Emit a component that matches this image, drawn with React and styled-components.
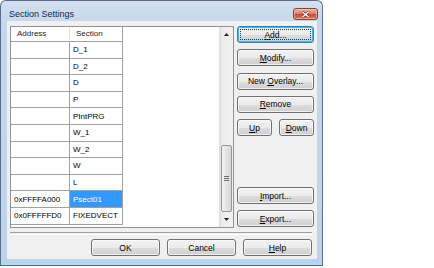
import React from "react";
import styled, { createGlobalStyle } from "styled-components";

const GlobalStyle = createGlobalStyle`
  html, body {
    margin: 0;
    padding: 0;
    background: #ffffff;
  }
  body {
    font-family: "Liberation Sans", Arial, sans-serif;
    color: #000;
  }
`;

const Page = styled.div`
  width: 434px;
  height: 268px;
  overflow: hidden;
`;

const Window = styled.div`
  box-sizing: border-box;
  width: 323px;
  height: 266px;
  display: flex;
  flex-direction: column;
  border: 1px solid #5a6f8e;
  border-bottom-color: #4f6a8d;
  border-radius: 6px 6px 0 0;
  padding: 0 5px 6px 6px;
  background: linear-gradient(#d3e0f0 0px, #c6d7ec 22px, #bdd2ea 100%);
  box-shadow: inset 0 -2px 0 #a9dcf3;
`;

const TitleBar = styled.div`
  height: 21px;
  display: flex;
  align-items: center;
  justify-content: space-between;
  padding-left: 2px;
`;

const Title = styled.span`
  font-size: 9px;
  color: #15284a;
  padding-top: 5px;
`;

const CloseButton = styled.div`
  box-sizing: border-box;
  width: 25px;
  height: 12px;
  margin-top: 6px;
  margin-right: -1px;
  display: flex;
  align-items: center;
  justify-content: center;
  border: 1px solid #8b3c2e;
  border-radius: 3px;
  background: linear-gradient(#eab3a5 0%, #d9826e 45%, #c4503a 55%, #d47a63 100%);
  box-shadow: inset 0 0 0 1px rgba(255, 220, 210, 0.5);
`;

const Client = styled.div`
  flex: 1;
  display: flex;
  flex-direction: column;
  background: #f0f0f0;
  padding: 5px 3px 3px 3px;
`;

const MainRow = styled.div`
  display: flex;
  gap: 3px;
  height: 202px;
`;

const ListBox = styled.div`
  box-sizing: border-box;
  width: 224px;
  height: 202px;
  display: flex;
  border: 1px solid #8d929b;
  background: #ffffff;
`;

const Grid = styled.div`
  flex: 1;
  align-self: flex-start;
  display: grid;
  grid-template-columns: 59px 53px;
  grid-template-rows: 15px repeat(11, 16.6px);
`;

const HeaderCell = styled.div`
  box-sizing: border-box;
  font-size: 8px;
  line-height: 14px;
  padding-left: 6px;
  color: #1c1c1c;
  border-bottom: 1px solid #a0a0a0;
  border-right: 1px solid ${({ $last }) => ($last ? "#a0a0a0" : "#e2e3e5")};
  background: #ffffff;
`;

const Cell = styled.div`
  box-sizing: border-box;
  font-size: 8px;
  display: flex;
  align-items: center;
  padding-left: 3px;
  border-bottom: 1px solid #a0a0a0;
  border-right: 1px solid #a0a0a0;
  white-space: nowrap;
  background: ${({ $selected }) => ($selected ? "#3399ff" : "#ffffff")};
  color: ${({ $selected }) => ($selected ? "#ffffff" : "#000000")};
`;

const ScrollBar = styled.div`
  box-sizing: border-box;
  width: 14px;
  display: flex;
  flex-direction: column;
  background: linear-gradient(90deg, #e3e3e3, #eeeeee 30%, #f2f2f2);
  border-left: 1px solid #e0e0e0;
`;

const ArrowBox = styled.div`
  height: 15px;
  display: flex;
  align-items: center;
  justify-content: center;
`;

const Track = styled.div`
  flex: 1;
  display: flex;
  flex-direction: column;
  justify-content: flex-end;
  align-items: center;
`;

const Thumb = styled.div`
  box-sizing: border-box;
  width: 11px;
  height: 67px;
  border: 1px solid #979797;
  border-radius: 2px;
  background: linear-gradient(90deg, #f4f4f4, #e4e4e4 50%, #d6d6d6);
  display: flex;
  flex-direction: column;
  align-items: center;
  justify-content: center;
  gap: 1px;
`;

const GripLine = styled.span`
  width: 5px;
  height: 1px;
  background: #6d6d6d;
`;

const SideColumn = styled.div`
  width: 77px;
  display: flex;
  flex-direction: column;
  padding-bottom: 1px;
`;

const ButtonGroup = styled.div`
  display: flex;
  flex-direction: column;
  gap: ${({ $gap }) => $gap || "6px"};
  margin-top: ${({ $push }) => ($push ? "auto" : "0")};
`;

const ButtonPair = styled.div`
  display: flex;
  justify-content: space-between;
`;

const Button = styled.div`
  position: relative;
  box-sizing: border-box;
  width: ${({ $w }) => $w || "100%"};
  height: 17px;
  display: flex;
  align-items: center;
  justify-content: center;
  font-size: 8.5px;
  color: #000;
  border: 1px solid ${({ $default }) => ($default ? "#3c7fb1" : "#707070")};
  border-radius: 3px;
  background: linear-gradient(#f2f2f2 0%, #ebebeb 50%, #dddddd 51%, #cfcfcf 100%);
  box-shadow: ${({ $default }) =>
    $default
      ? "inset 0 0 0 1px #48b6e0"
      : "inset 0 0 0 1px rgba(255, 255, 255, 0.7)"};

  ${({ $default }) =>
    $default &&
    `
    &::after {
      content: "";
      position: absolute;
      inset: 2px;
      border: 1px dotted #1b3f5c;
    }
  `}

  u {
    text-decoration: underline;
    text-underline-offset: 1px;
  }
`;

const Separator = styled.div`
  height: 1px;
  margin: 4px 2px 0 0;
  border-top: 1px solid #a0a0a0;
  border-bottom: 1px solid #ffffff;
`;

const BottomRow = styled.div`
  display: flex;
  justify-content: flex-end;
  gap: 7px;
  margin-top: 4px;
  padding-right: 2px;
`;

const rows = [
  ["", "D_1"],
  ["", "D_2"],
  ["", "D"],
  ["", "P"],
  ["", "PIntPRG"],
  ["", "W_1"],
  ["", "W_2"],
  ["", "W"],
  ["", "L"],
  ["0xFFFFA000", "Psect01", true],
  ["0x0FFFFFD0", "FIXEDVECT"],
];

function Arrow({ down }) {
  return (
    <svg width="5" height="3" viewBox="0 0 5 3">
      <path d={down ? "M0 0 H5 L2.5 3 Z" : "M0 3 H5 L2.5 0 Z"} fill="#222" />
    </svg>
  );
}

export default function App() {
  return (
    <Page>
      <GlobalStyle />
      <Window>
        <TitleBar>
          <Title>Section Settings</Title>
          <CloseButton>
            <svg width="9" height="7" viewBox="0 0 9 7">
              <path d="M1.5 1 L7.5 6 M7.5 1 L1.5 6" stroke="#6b2418" strokeWidth="2.6" />
              <path d="M1.5 1 L7.5 6 M7.5 1 L1.5 6" stroke="#ffffff" strokeWidth="1.5" />
            </svg>
          </CloseButton>
        </TitleBar>
        <Client>
          <MainRow>
            <ListBox>
              <Grid>
                <HeaderCell>Address</HeaderCell>
                <HeaderCell $last>Section</HeaderCell>
                {rows.map(([addr, sec, sel]) => (
                  <React.Fragment key={sec}>
                    <Cell>{addr}</Cell>
                    <Cell $selected={sel}>{sec}</Cell>
                  </React.Fragment>
                ))}
              </Grid>
              <ScrollBar>
                <ArrowBox>
                  <Arrow />
                </ArrowBox>
                <Track>
                  <Thumb>
                    <GripLine />
                    <GripLine />
                    <GripLine />
                  </Thumb>
                </Track>
                <ArrowBox>
                  <Arrow down />
                </ArrowBox>
              </ScrollBar>
            </ListBox>
            <SideColumn>
              <ButtonGroup $gap="6.33px">
                <Button $default>
                  <span><u>A</u>dd...</span>
                </Button>
                <Button>
                  <span><u>M</u>odify...</span>
                </Button>
                <Button>
                  <span>New <u>O</u>verlay...</span>
                </Button>
                <Button>
                  <span><u>R</u>emove</span>
                </Button>
                <ButtonPair>
                  <Button $w="35px">
                    <span><u>U</u>p</span>
                  </Button>
                  <Button $w="35px">
                    <span><u>D</u>own</span>
                  </Button>
                </ButtonPair>
              </ButtonGroup>
              <ButtonGroup $push>
                <Button>
                  <span><u>I</u>mport...</span>
                </Button>
                <Button>
                  <span><u>E</u>xport...</span>
                </Button>
              </ButtonGroup>
            </SideColumn>
          </MainRow>
          <Separator />
          <BottomRow>
            <Button $w="69px">OK</Button>
            <Button $w="69px">Cancel</Button>
            <Button $w="69px">
              <span><u>H</u>elp</span>
            </Button>
          </BottomRow>
        </Client>
      </Window>
    </Page>
  );
}
